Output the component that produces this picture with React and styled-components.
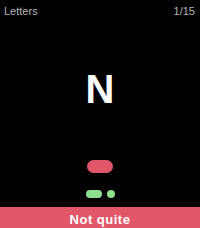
import React from "react";
import styled, { createGlobalStyle } from "styled-components";

const Global = createGlobalStyle`
  html, body { margin: 0; padding: 0; background: #000; }
  body { width: 200px; height: 228px; overflow: hidden; font-family: "Liberation Sans", Arial, sans-serif; }
`;

const Screen = styled.div`
  width: 200px;
  height: 228px;
  background: #000;
  display: flex;
  flex-direction: column;
`;

const Header = styled.div`
  display: flex;
  justify-content: space-between;
  padding: 5px 5px 0 4px;
  height: 13px;
  font-size: 11px;
  line-height: 13px;
  color: #b4b4b4;
`;

const Letter = styled.div`
  margin-top: 51px;
  text-align: center;
  font-size: 40px;
  line-height: 40px;
  font-weight: bold;
  color: #fff;
`;

const Pill = styled.div`
  width: ${p => p.$w}px;
  height: ${p => p.$h}px;
  border-radius: ${p => p.$h / 2}px;
  background: ${p => p.$color};
`;

const Center = styled.div`
  display: flex;
  justify-content: center;
  gap: ${p => p.$gap || 0}px;
  margin-top: ${p => p.$mt}px;
  padding-left: ${p => p.$pl || 0}px;
`;

const Footer = styled.div`
  margin-top: auto;
  height: 21px;
  box-sizing: border-box;
  padding-top: 6px;
  background: #e2566a;
  color: #fff;
  text-align: center;
  font-size: 13px;
  line-height: 13px;
  font-weight: bold;
  letter-spacing: 0.5px;
`;

export default function App() {
  return (
    <>
      <Global />
      <Screen>
        <Header>
          <span>Letters</span>
          <span>1/15</span>
        </Header>
        <Letter>N</Letter>
        <Center $mt={51}>
          <Pill $w={26} $h={13} $color="#e2566a" />
        </Center>
        <Center $mt={17} $gap={5}>
          <Pill $w={16} $h={8} $color="#8ee08e" />
          <Pill $w={8} $h={8} $color="#8ee08e" />
        </Center>
        <Footer>Not quite</Footer>
      </Screen>
    </>
  );
}
